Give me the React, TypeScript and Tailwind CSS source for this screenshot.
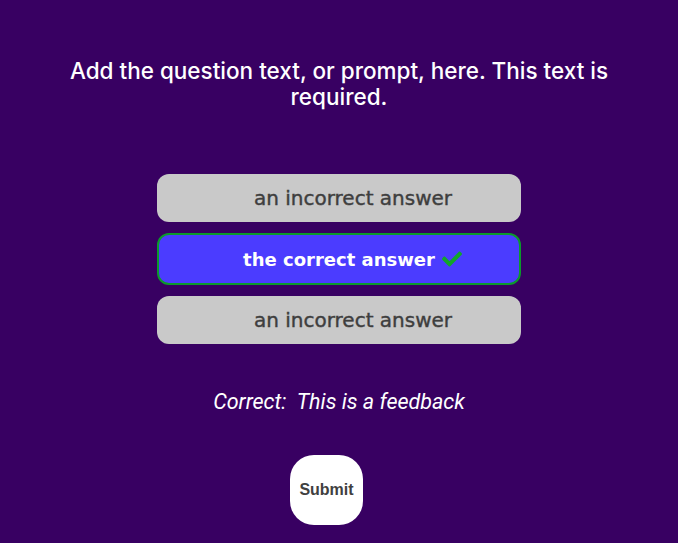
import { FaCheck } from "react-icons/fa";

export default function App() {
  const answers = [
    { text: "an incorrect answer", correct: false },
    { text: "the correct answer", correct: true },
    { text: "an incorrect answer", correct: false },
  ];

  return (
    <div className="min-h-[543px] w-full bg-[#380062] flex flex-col items-center pt-[58px]">
      <h1 className="w-[570px] text-center text-white text-[22.5px] leading-[26px] font-medium font-['Inter',sans-serif]">
        Add the question text, or prompt, here. This text is required.
      </h1>

      <div className="mt-[64px] flex flex-col gap-[11px] w-[364px]">
        {answers.map((a, i) =>
          a.correct ? (
            <div
              key={i}
              className="h-[52px] rounded-[12px] bg-[#4b3cff] border-2 border-[#0b9a2b] flex items-center justify-center pl-[28px] text-white text-[18px] font-bold font-['DejaVu_Sans',sans-serif]"
            >
              <span>{a.text}</span>
              <FaCheck className="ml-[6px] w-[22px] h-[20px] text-[#12a52a]" />
            </div>
          ) : (
            <div
              key={i}
              className="h-[48px] rounded-[12px] bg-[#c9c9c9] flex items-center justify-center pl-[28px] text-[#3e3e3e] text-[20px] font-normal font-['DejaVu_Sans',sans-serif] [-webkit-text-stroke:0.4px_#3e3e3e]"
            >
              {a.text}
            </div>
          )
        )}
      </div>

      <p className="mt-[42px] text-white italic text-[21.5px] font-['Roboto',sans-serif] whitespace-pre">
        {"Correct:  This is a feedback"}
      </p>

      <button className="mt-[37px] mr-[25px] w-[73px] h-[70px] rounded-[24px] bg-white text-[#404040] text-[16px] font-bold font-['Liberation_Sans',Arial,sans-serif]">
        Submit
      </button>
    </div>
  );
}
